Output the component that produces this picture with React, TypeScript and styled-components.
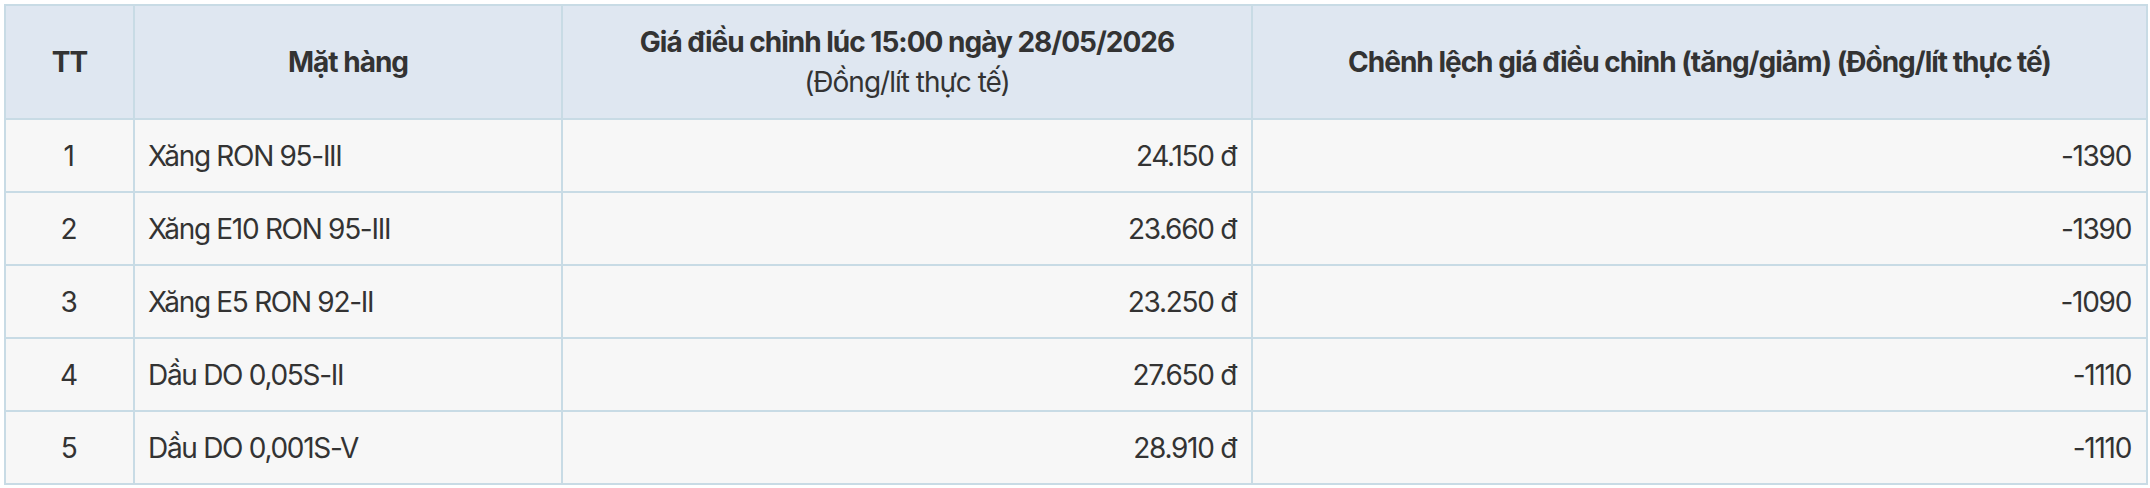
import React from "react";
import styled, { createGlobalStyle } from "styled-components";

const Global = createGlobalStyle`
  html, body { margin: 0; padding: 0; background: #ffffff; }
  body { font-family: Inter, "Noto Sans", sans-serif; color: #333333; }
  *, *::before, *::after { box-sizing: border-box; }
`;

const Wrap = styled.div`
  padding: 4px;
  width: 2150px;
`;

const Table = styled.table`
  width: 100%;
  border-collapse: collapse;
  table-layout: fixed;
  border: 2px solid #c8dbe5;
  font-size: 28px;
  letter-spacing: -1px;
`;

const Col = styled.col<{ $w: number }>`
  width: ${(p) => p.$w}px;
`;

const Th = styled.th`
  background: #dfe7f1;
  border: 2px solid #c8dbe5;
  height: 114px;
  padding: 0 15px;
  text-align: center;
  font-weight: 700;
  line-height: 40px;
  color: #333333;
`;

const Sub = styled.span`
  display: block;
  font-weight: 400;
`;

const Td = styled.td<{ $align?: "left" | "center" | "right" }>`
  background: #f7f7f7;
  border: 2px solid #c8dbe5;
  height: 73px;
  padding: 0 15px 0 13px;
  text-align: ${(p) => p.$align || "left"};
  letter-spacing: -1.3px;
  color: #333333;
`;

const rows = [
  ["1", "Xăng RON 95-III", "24.150 đ", "-1390"],
  ["2", "Xăng E10 RON 95-III", "23.660 đ", "-1390"],
  ["3", "Xăng E5 RON 92-II", "23.250 đ", "-1090"],
  ["4", "Dầu DO 0,05S-II", "27.650 đ", "-1110"],
  ["5", "Dầu DO 0,001S-V", "28.910 đ", "-1110"],
];

export default function App() {
  return (
    <Wrap>
      <Global />
      <Table>
        <colgroup>
          <Col $w={129} />
          <Col $w={428} />
          <Col $w={690} />
          <Col $w={895} />
        </colgroup>
        <thead>
          <tr>
            <Th>TT</Th>
            <Th>Mặt hàng</Th>
            <Th>
              Giá điều chỉnh lúc 15:00 ngày 28/05/2026
              <Sub>(Đồng/lít thực tế)</Sub>
            </Th>
            <Th>Chênh lệch giá điều chỉnh (tăng/giảm) (Đồng/lít thực tế)</Th>
          </tr>
        </thead>
        <tbody>
          {rows.map((r) => (
            <tr key={r[0]}>
              <Td $align="center">{r[0]}</Td>
              <Td>{r[1]}</Td>
              <Td $align="right">{r[2]}</Td>
              <Td $align="right">{r[3]}</Td>
            </tr>
          ))}
        </tbody>
      </Table>
    </Wrap>
  );
}
